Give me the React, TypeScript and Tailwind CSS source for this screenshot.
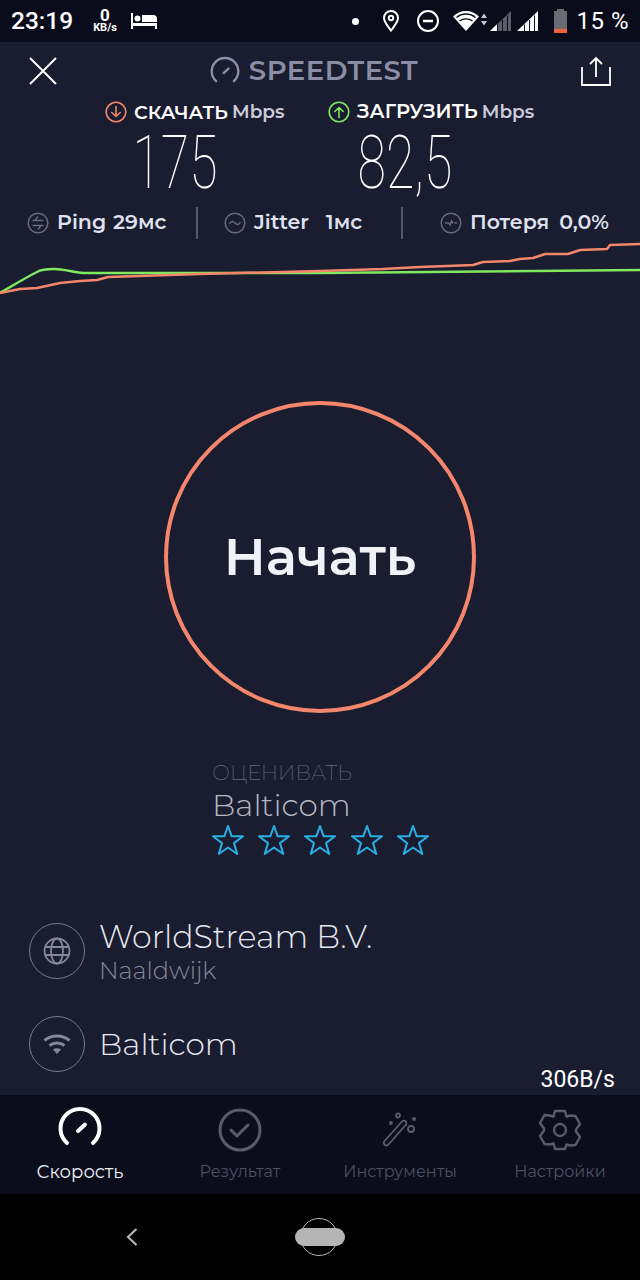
const sans = "font-['Montserrat','Inter','Noto_Sans',sans-serif]";

function GaugeIcon({ className, width }: { className?: string; width: number }) {
  return (
    <svg viewBox="0 0 44 44" fill="none" stroke="currentColor" strokeWidth={width} strokeLinecap="round" className={className}>
      <path d="M9 37 A19.500 19.500 0 1 1 35 37" />
      <path d="M20 25 L27 18.500" />
    </svg>
  );
}

function CircleArrow({ up, color }: { up?: boolean; color: string }) {
  return (
    <svg viewBox="0 0 22 22" fill="none" stroke={color} strokeWidth="1.6" strokeLinecap="round" strokeLinejoin="round" className="h-[22px] w-[22px]">
      <circle cx="11" cy="11" r="9.800" />
      {up ? <path d="M11 16.500V6.500M6.800 10.500 11 6.500l4.200 4" /> : <path d="M11 5.500v10M6.800 11.500l4.200 4 4.200-4" />}
    </svg>
  );
}

function StatusBar() {
  return (
    <div className="flex h-[42px] items-center bg-[#0a0c1b] pl-[11px] pr-[11px] text-white font-['Roboto',sans-serif]">
      <span className="text-[24.500px] leading-none font-medium w-[64px]">23:19</span>
      <div className="ml-[17px] flex w-[26px] flex-col items-center">
        <span className="text-[17px] font-bold leading-[14px]">0</span>
        <span className="text-[11px] font-bold leading-[12px]">KB/s</span>
      </div>
      <svg viewBox="0 0 26 16" fill="white" className="ml-[13px] h-[16px] w-[26px]">
        <path d="M0 0h2v10h24v6h-2v-3H2v3H0z" />
        <circle cx="6.500" cy="5.500" r="3" />
        <path d="M11 2h11a4 4 0 0 1 4 4v3H11z" />
      </svg>
      <div className="ml-auto flex items-center">
        <span className="h-[7px] w-[7px] rounded-full bg-white" />
        <svg viewBox="0 0 18 22" fill="none" stroke="white" strokeWidth="2" className="ml-[23px] h-[22px] w-[18px]">
          <path d="M9 20.500C5 15 2 12 2 8a7 7 0 0 1 14 0c0 4-3 7-7 12.500z" />
          <circle cx="9" cy="8" r="2.200" />
        </svg>
        <svg viewBox="0 0 24 24" fill="none" stroke="white" strokeWidth="2" className="ml-[16px] h-[24px] w-[24px]">
          <circle cx="12" cy="12" r="10" />
          <path d="M7 12h10" strokeWidth="2.500" />
        </svg>
        <svg viewBox="0 0 36 22" fill="white" className="ml-[13px] h-[22px] w-[36px]">
          <path d="M13 21 0 6.500C3.500 3 8 1 13 1s9.500 2 13 5.500z" />
          <path d="M3.500 7.500C6 5.300 9.300 4 13 4s7 1.300 9.500 3.500M6.500 11c1.800-1.400 4-2.200 6.500-2.200s4.700.8 6.500 2.200" stroke="#0a0c1b" strokeWidth="1.300" fill="none" />
          <path d="M31 3.500 34 8h-6zM28 11h6l-3 4.500z" fill="#c9cad1" />
        </svg>
        <svg viewBox="0 0 22 22" className="ml-[1px] h-[22px] w-[22px]">
          <path d="M0 21 21 1v20z" fill="#5c5d68" />
          <path d="M0 21l7-6.700V21z" fill="white" />
          <path d="M7 14.500h1V21H7zM12 10h1v11h-1zM17 5.500h1V21h-1z" fill="#0a0c1b" />
        </svg>
        <svg viewBox="0 0 22 22" className="ml-[5px] h-[22px] w-[22px]">
          <path d="M0 21 21 1v20z" fill="white" />
          <path d="M7 14.500h1V21H7zM12 10h1v11h-1zM17 5.500h1V21h-1z" fill="#0a0c1b" />
        </svg>
        <div className="ml-[15px] flex h-[24px] w-[13px] flex-col items-center">
          <span className="h-[2px] w-[7px] bg-[#6a6b74]" />
          <span className="w-full flex-1 bg-[#6a6b74]" />
          <span className="h-[4px] w-full bg-[#f2623c]" />
        </div>
        <span className="ml-[9px] text-[24px] leading-none tracking-[0.5px]">15 %</span>
      </div>
    </div>
  );
}

function Stat({ icon, label, value, gap }: { icon: React.ReactNode; label: string; value: string; gap: string }) {
  return (
    <div className="flex items-center">
      {icon}
      <span className={`ml-[8px] text-[20.500px] font-semibold leading-none text-[#dfe1ee] ${sans}`}>{label}</span>
      <span className={`text-[20.500px] font-semibold leading-none text-[#dfe1ee] ${sans} ${gap}`}>{value}</span>
    </div>
  );
}

function StatIcon({ children }: { children: React.ReactNode }) {
  return (
    <svg viewBox="0 0 22 22" fill="none" stroke="#666a7e" strokeWidth="1.500" className="h-[22px] w-[22px]">
      <circle cx="11" cy="11" r="9.800" />
      {children}
    </svg>
  );
}

function Chart() {
  return (
    <svg viewBox="0 0 640 60" fill="none" strokeWidth="2.500" strokeLinejoin="round" className="block h-[60px] w-full">
      <path stroke="#7fe85f" d="M0 53 C12 46 25 38 37 32 C42 29 48 29 54 29 C64 29 72 32 83 33 L107 33 200 33 320 33 640 30" />
      <path stroke="#f4876b" d="M0 53 20 49 37 48 60 43 80 41 97 40 108 37 200 34 320 31 383 29 420 27 473 25 483 22 510 21 520 19 533 18 545 14 568 14 580 10 607 9 610 5 640 4" />
    </svg>
  );
}

function Tab({ label, active, children }: { label: string; active?: boolean; children: React.ReactNode }) {
  return (
    <div className="flex w-[160px] flex-col items-center">
      <div className="flex h-[46px] items-center justify-center">{children}</div>
      <span className={`mt-[9px] leading-[20px] ${sans} ${active ? "text-[18px] text-[#eef0f6]" : "text-[16px] text-[#4d5062]"}`}>{label}</span>
    </div>
  );
}

export default function App() {
  return (
    <div className="relative flex h-[1280px] w-[640px] flex-col overflow-hidden bg-[#1a1c2f]">
      <StatusBar />

      <div className="flex h-[58px] items-center justify-between pl-[29px] pr-[29px]">
        <svg viewBox="0 0 28 28" stroke="white" strokeWidth="2" fill="none" className="h-[28px] w-[28px]">
          <path d="M1 1l26 26M27 1 1 27" />
        </svg>
        <div className="mr-[10px] flex items-center">
          <GaugeIcon width={3.500} className="h-[30px] w-[30px] text-[#8b8ea4]" />
          <span className={`ml-[9px] text-[27.500px] font-semibold leading-none tracking-[0.5px] text-[#8b8ea4] ${sans}`}>SPEEDTEST</span>
        </div>
        <svg viewBox="0 0 30 30" stroke="white" strokeWidth="1.800" fill="none" className="h-[30px] w-[30px]">
          <path d="M1 11v18h28V11M15 21V2M9 8l6-6 6 6" />
        </svg>
      </div>

      <div className="flex h-[24px] items-center pl-[105px]">
        <div className="flex w-[223px] items-center">
          <CircleArrow color="#f4876b" />
          <span className={`ml-[7px] text-[19px] font-semibold leading-none text-white ${sans}`}>СКАЧАТЬ</span>
          <span className={`ml-[4px] text-[18.500px] font-semibold leading-none text-[#c9cbdb] ${sans}`}>Mbps</span>
        </div>
        <div className="flex items-center">
          <CircleArrow up color="#7fe85f" />
          <span className={`ml-[7px] text-[19.500px] font-semibold leading-none text-white ${sans}`}>ЗАГРУЗИТЬ</span>
          <span className={`ml-[4px] text-[18.500px] font-semibold leading-none text-[#c9cbdb] ${sans}`}>Mbps</span>
        </div>
      </div>

      <div className="mt-[6px] flex h-[66px] items-center">
        <span className="ml-[95px] w-[160px] origin-center scale-x-[0.7] text-center font-['Roboto',sans-serif] text-[74px] font-thin leading-[66px] text-white">175</span>
        <span className="ml-[70px] w-[160px] origin-center scale-x-[0.7] text-center font-['Roboto',sans-serif] text-[74px] font-thin leading-[66px] text-white">82,5</span>
      </div>

      <div className="mt-[10px] flex h-[33px] items-center pl-[27px]">
        <div className="w-[169px]">
          <Stat label="Ping" value="29мс" gap="ml-[7px]" icon={<StatIcon><path d="M5.500 8.500h11M8 8.500l3-4M5.500 13.500h11M14 13.500l-3 4" /></StatIcon>} />
        </div>
        <span className="h-[32px] w-[2px] bg-[#55586c]" />
        <div className="ml-[26px] w-[177px]">
          <Stat label="Jitter" value="1мс" gap="ml-[17px]" icon={<StatIcon><path d="M5.500 12c1.500-3 3.500-3 5.500-1s4 2 5.500-1" /></StatIcon>} />
        </div>
        <span className="h-[32px] w-[2px] bg-[#55586c]" />
        <div className="ml-[37px]">
          <Stat label="Потеря" value="0,0%" gap="ml-[10px]" icon={<StatIcon><path d="M5 11h3.500l1.500 1.800L11.500 9l1.500 2.300M14.500 11H17" /></StatIcon>} />
        </div>
      </div>

      <div className="mt-[1px]">
        <Chart />
      </div>

      <div className="mt-[101px] flex justify-center">
        <div className="flex h-[312px] w-[312px] items-center justify-center rounded-full border-[4px] border-[#f4876b]">
          <span className={`text-[51.500px] font-semibold leading-none text-[#f1f2f7] ${sans}`}>Начать</span>
        </div>
      </div>

      <div className="mt-[49px] pl-[212px]">
        <div className={`text-[21px] font-extralight leading-[22px] text-[#66687b] ${sans}`}>ОЦЕНИВАТЬ</div>
        <div className={`mt-[3px] text-[31px] font-light leading-[36px] text-[#b5b7c4] ${sans}`}>Balticom</div>
        <div className="mt-[1px] flex gap-[14.200px]">
          {[0, 1, 2, 3, 4].map((i) => (
            <svg key={i} viewBox="0 0 32 32" fill="none" stroke="#2aaee6" strokeWidth="2" strokeLinejoin="round" className="h-[32px] w-[32px]">
              <path d="M16 2l3.700 10.300H31l-9 6.800 3.300 10.900L16 23.500 6.700 30 10 19.100l-9-6.800h11.300z" />
            </svg>
          ))}
        </div>
      </div>

      <div className="mt-[67px] flex h-[56px] items-center pl-[29px]">
        <div className="flex h-[56px] w-[56px] items-center justify-center rounded-full border border-[#7b7d8d]">
          <svg viewBox="0 0 28 28" fill="none" stroke="#85879a" strokeWidth="1.800" className="h-[28px] w-[28px]">
            <circle cx="14" cy="14" r="12.500" />
            <ellipse cx="14" cy="14" rx="6" ry="12.500" />
            <path d="M2 10h24M2 18h24" />
          </svg>
        </div>
        <div className="ml-[14px] mt-[2px]">
          <div className={`text-[31.700px] font-light leading-[36px] text-[#e6e7f0] ${sans}`}>WorldStream B.V.</div>
          <div className={`mt-[2px] text-[24px] font-light leading-[28px] text-[#85879a] ${sans}`}>Naaldwijk</div>
        </div>
      </div>

      <div className="mt-[37px] flex h-[56px] items-center pl-[29px]">
        <div className="flex h-[56px] w-[56px] items-center justify-center rounded-full border border-[#7b7d8d]">
          <svg viewBox="0 0 28 22" fill="none" stroke="#85879a" strokeWidth="3" className="h-[22px] w-[28px]">
            <path d="M1.500 7.500C5 4.500 9.500 3 14 3s9 1.500 12.500 4.500M6.500 12.500C8.500 11 11 10 14 10s5.500 1 7.500 2.500" />
            <path d="M14 21l-4-4.500c1-.8 2.500-1.300 4-1.300s3 .5 4 1.300z" fill="#85879a" stroke="none" />
          </svg>
        </div>
        <span className={`ml-[14px] text-[31px] font-light leading-none text-[#e6e7f0] ${sans}`}>Balticom</span>
      </div>

      <span className="absolute right-[25px] top-[1067px] font-['Roboto',sans-serif] text-[23px] leading-[26px] text-white">306B/s</span>

      <div className="absolute bottom-[86px] left-0 flex h-[99px] w-full bg-[#0b0d1c] pt-[12px]">
        <Tab label="Скорость" active>
          <GaugeIcon width={4} className="-mt-[5px] h-[44px] w-[44px] text-white" />
        </Tab>
        <Tab label="Результат">
          <svg viewBox="0 0 44 44" fill="none" stroke="#5a5c6e" strokeWidth="3" strokeLinecap="round" strokeLinejoin="round" className="h-[44px] w-[44px]">
            <circle cx="22" cy="22" r="20" />
            <path d="M13 22l6 6 11-11" />
          </svg>
        </Tab>
        <Tab label="Инструменты">
          <svg viewBox="0 0 36 36" fill="none" stroke="#5a5c6e" strokeWidth="1.800" className="h-[36px] w-[36px]">
            <path d="M2.500 29 20 9.500a2.500 2.500 0 0 1 3.800 3.300L6.500 32.500a2.500 2.500 0 0 1-4-3.500z" />
            <circle cx="16" cy="3.500" r="2" />
            <circle cx="29" cy="17" r="3" />
            <circle cx="32" cy="7" r="1" fill="#5a5c6e" />
            <circle cx="9" cy="11" r="1" fill="#5a5c6e" />
          </svg>
        </Tab>
        <Tab label="Настройки">
          <svg viewBox="0 0 44 44" fill="none" stroke="#5a5c6e" strokeWidth="2.400" strokeLinejoin="round" className="h-[44px] w-[44px]">
            <path d="M17 3h10l1.500 5.500 4-1 5 .5 4.500 8-4 5.500v2l4 5.500-4.500 8-5 .5-4-1L27 41H17l-1.500-5.500-4 1-5-.5L2 28l4-5.500v-2L2 15l4.500-8 5 .5 4 1z" />
            <circle cx="22" cy="22" r="6" />
          </svg>
        </Tab>
      </div>

      <div className="absolute bottom-0 left-0 flex h-[86px] w-full items-center bg-black">
        <svg viewBox="0 0 12 20" fill="none" stroke="#b5b5b5" strokeWidth="2.200" className="ml-[126px] h-[20px] w-[12px]">
          <path d="M10.500 2 2 10l8.500 8" />
        </svg>
        <div className="relative ml-[157px] flex h-[38px] w-[50px] items-center justify-center">
          <span className="absolute left-[5px] h-[38px] w-[38px] rounded-full border border-[#b5b5b5]" />
          <span className="absolute inset-x-0 top-[10px] h-[18px] rounded-full bg-[#b5b5b5]" />
        </div>
      </div>
    </div>
  );
}
